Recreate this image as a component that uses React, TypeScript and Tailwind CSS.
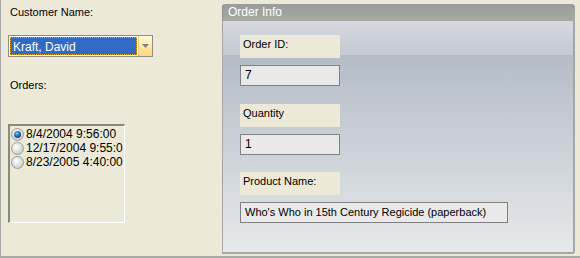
import React from "react";

const font = { fontFamily: '"Liberation Sans", Arial, sans-serif' };

function Radio({ checked }: { checked?: boolean }) {
  return (
    <svg width="13" height="13" viewBox="0 0 13 13" className="shrink-0">
      <defs>
        <radialGradient id="rg" cx="40%" cy="35%" r="70%">
          <stop offset="0%" stopColor="#ffffff" />
          <stop offset="100%" stopColor="#c8c8c4" />
        </radialGradient>
        <radialGradient id="dot" cx="40%" cy="35%" r="70%">
          <stop offset="0%" stopColor="#7fc4f0" />
          <stop offset="60%" stopColor="#1a6ab4" />
          <stop offset="100%" stopColor="#0b3c78" />
        </radialGradient>
      </defs>
      <circle cx="6.5" cy="6.5" r="6" fill="url(#rg)" stroke="#9c9c98" strokeWidth="1" />
      {checked && <circle cx="6.5" cy="6.5" r="3.5" fill="url(#dot)" />}
    </svg>
  );
}

export default function App() {
  return (
    <div
      style={font}
      className="w-[580px] h-[258px] flex bg-[#ece9d8] border-l border-b-2 border-[#a8a8a4] text-black overflow-hidden"
    >
      <div className="w-[221px] shrink-0 pl-[7px] flex flex-col">
        <div className="pl-[2px] pt-[5px] text-[11px] leading-[14px]">Customer Name:</div>
        <div className="mt-[16px] w-[145px] h-[22px] border border-[#8c8c88] flex bg-white">
          <div className="w-[129px] h-full p-px">
            <div className="h-full bg-[#316ac5] outline-1 outline-dotted outline-[#e0a020] -outline-offset-1 border border-dotted border-black text-white text-[12px] leading-[18px] pl-[2px]">
              Kraft, David
            </div>
          </div>
          <div className="w-[14px] h-full my-0 bg-[linear-gradient(to_bottom,#fff8dc,#ffd878)] flex items-center justify-center border-l border-[#e8d090]">
            <svg width="7" height="4" viewBox="0 0 7 4">
              <path d="M0 0h7L3.5 4z" fill="#808080" />
            </svg>
          </div>
        </div>
        <div className="pl-[2px] mt-[21px] text-[11px] leading-[14px]">Orders:</div>
        <div className="mt-[32px] w-[117px] h-[99px] border-t-2 border-l-2 border-t-[#8a8a7c] border-l-[#8a8a7c] border-r border-b border-r-white border-b-white pt-px pl-px overflow-hidden">
          {[
            ["8/4/2004 9:56:00", true],
            ["12/17/2004 9:55:0", false],
            ["8/23/2005 4:40:00", false],
          ].map(([t, c], i) => (
            <div key={i} className="flex items-center h-[14px] gap-[2px] whitespace-nowrap text-[12px]">
              <Radio checked={c as boolean} />
              <span>{t as string}</span>
            </div>
          ))}
        </div>
      </div>
      <div className="mt-[4px] mb-[2px] w-[353px] flex flex-col">
        <div className="h-[17px] shrink-0 rounded-t-[3px] bg-[linear-gradient(to_bottom,#9a9c98,#a6a8a4)] text-white text-[12px] leading-[16px] pl-[5px] border-l border-[#909290]">
          Order Info
        </div>
        <div className="flex-1 border-l border-r-2 border-b-2 border-[#a4a6a8] rounded-br-[3px] bg-[linear-gradient(to_bottom,#d6d9e1_0px,#c4c9d2_34px,#b4bcc6_34px,#e6e9eb_100%)] pl-[17px] pt-[14px] text-[11px]">
          <div className="w-[100px] h-[23px] bg-[#ece9d8] pl-[3px] pt-[2px] leading-[14px]">Order ID:</div>
          <div className="mt-[7px] w-[100px] h-[21px] bg-[#e9e9e9] border border-[#808080] pl-[4px] text-[12px] leading-[19px]">7</div>
          <div className="mt-[18px] w-[100px] h-[23px] bg-[#ece9d8] pl-[3px] pt-[2px] leading-[14px]">Quantity</div>
          <div className="mt-[7px] w-[100px] h-[21px] bg-[#e9e9e9] border border-[#808080] pl-[4px] text-[12px] leading-[19px]">1</div>
          <div className="mt-[17px] w-[100px] h-[23px] bg-[#ece9d8] pl-[3px] pt-[2px] leading-[14px]">Product Name:</div>
          <div className="mt-[7px] w-[268px] h-[21px] bg-[#e9e9e9] border border-[#808080] pl-[4px] text-[11px] leading-[19px] whitespace-nowrap">
            Who's Who in 15th Century Regicide (paperback)
          </div>
        </div>
      </div>
    </div>
  );
}
